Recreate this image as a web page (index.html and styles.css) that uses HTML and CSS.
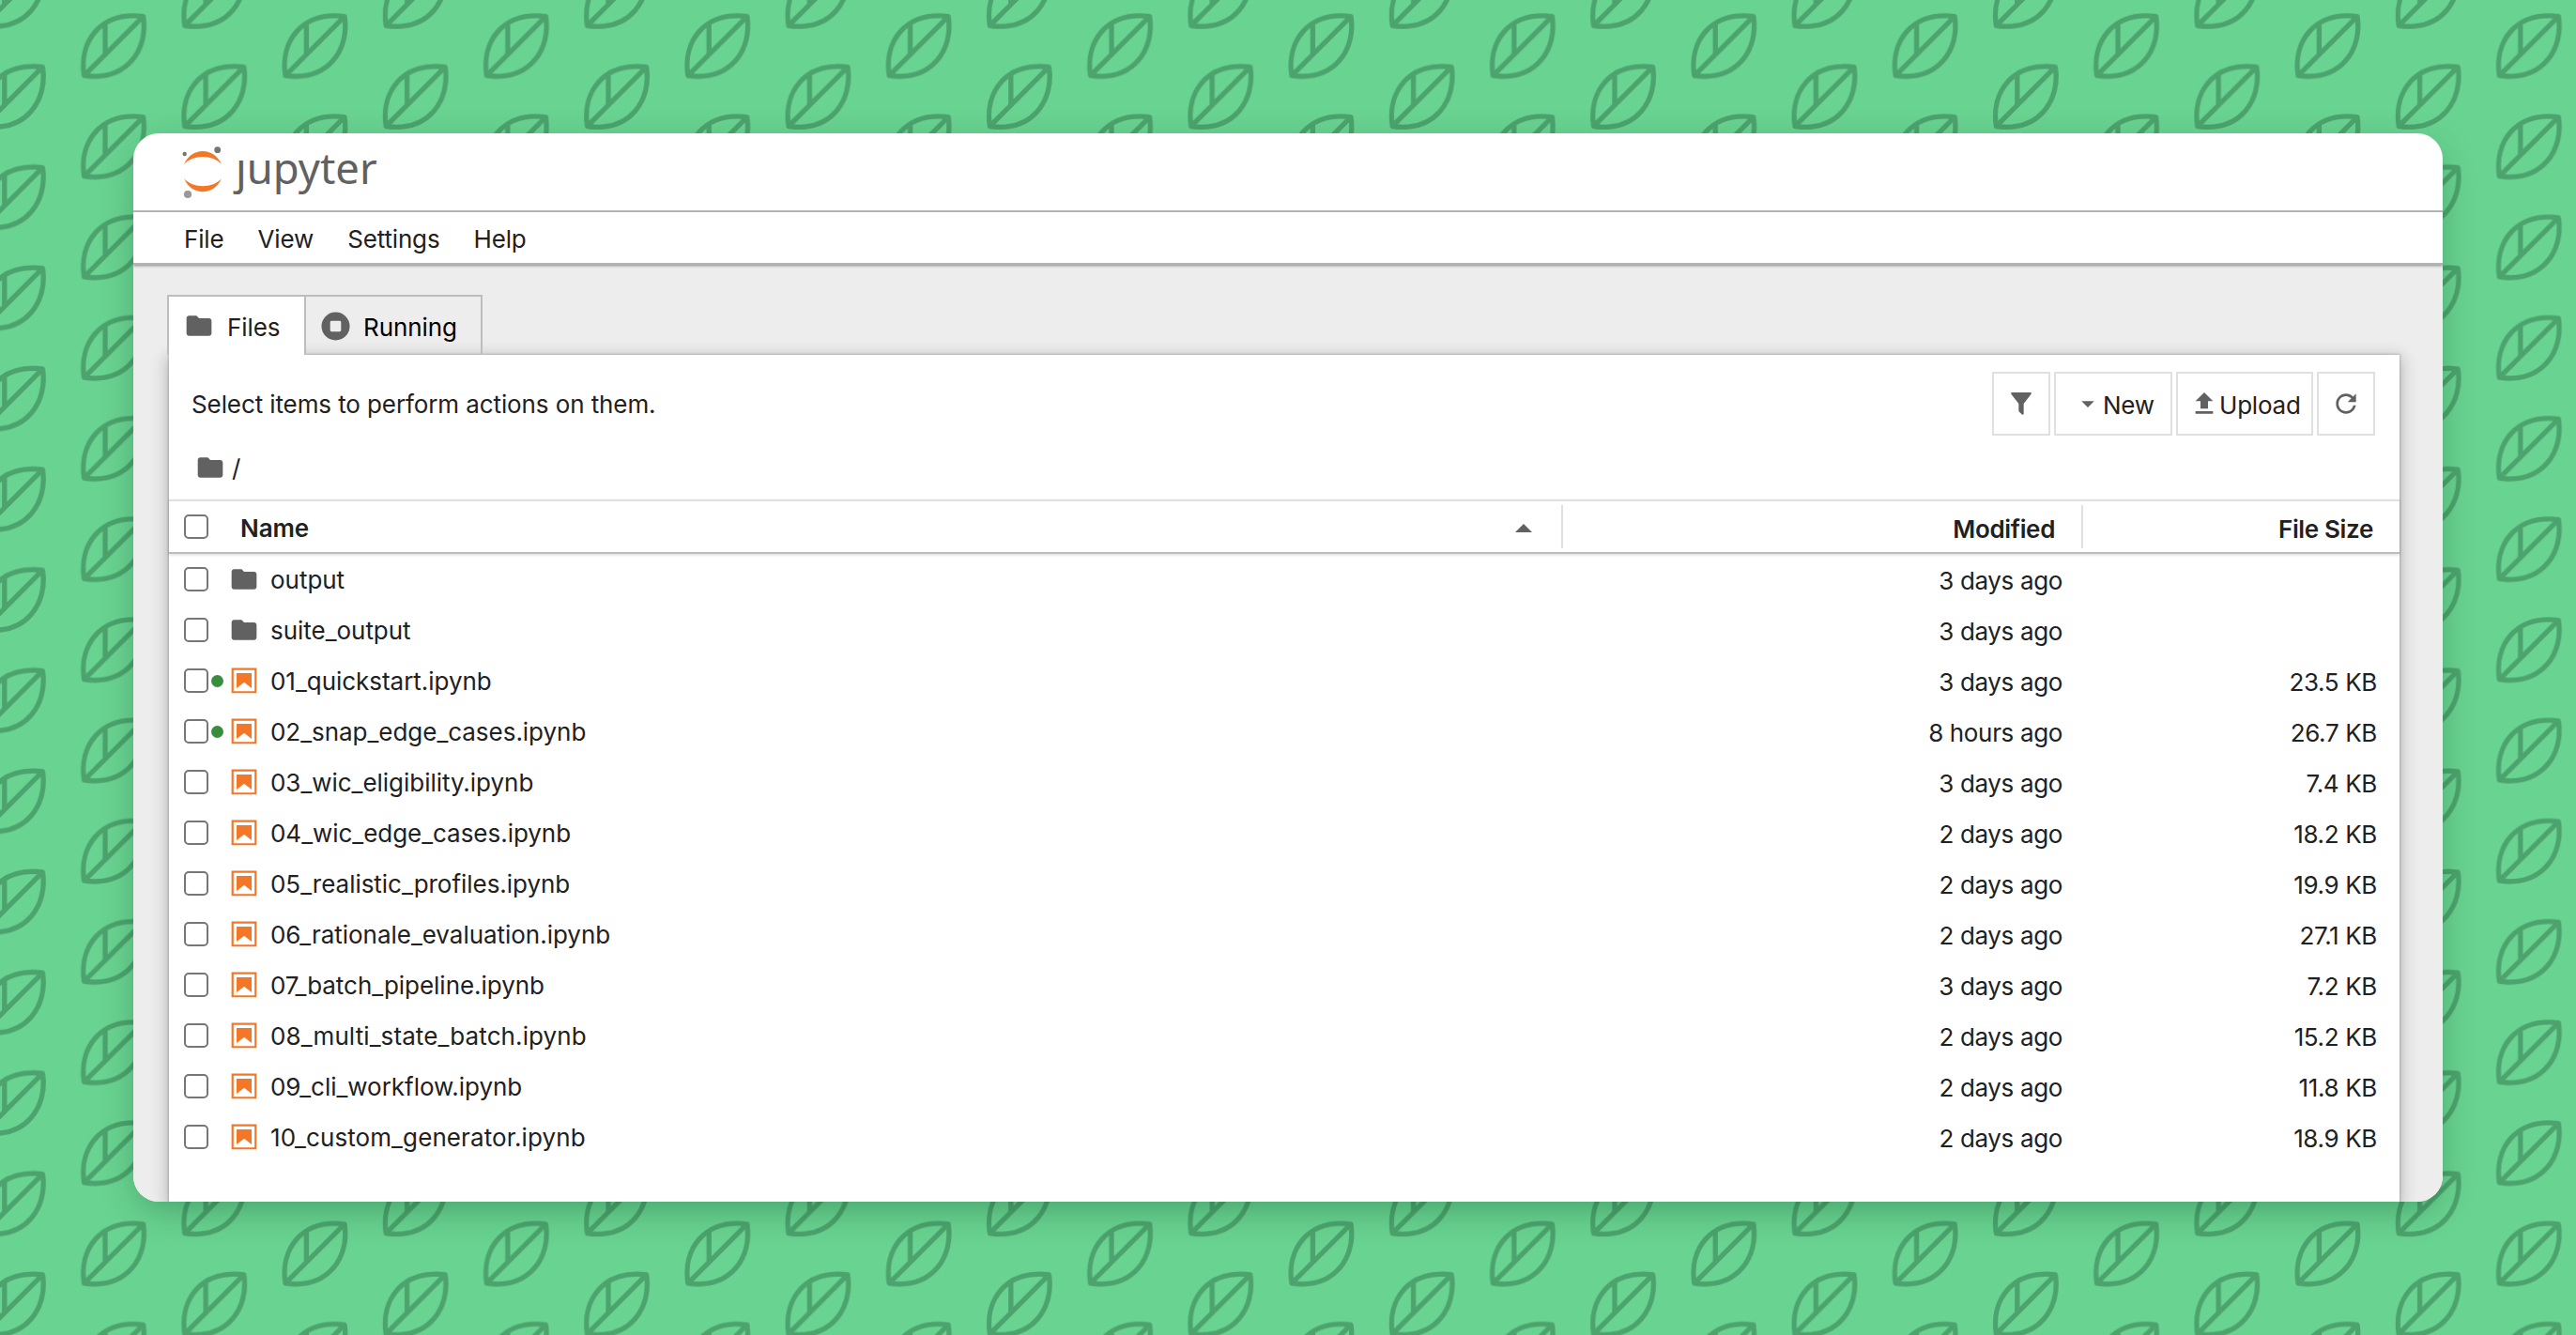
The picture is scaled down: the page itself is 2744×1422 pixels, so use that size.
FILE: index.html
```
<!DOCTYPE html>
<html lang="en">
<head>
<meta charset="utf-8">
<title>Home</title>
<link rel="stylesheet" href="styles.css">
</head>
<body>
<svg class="backdrop" aria-hidden="true">
  <defs>
    <pattern id="leaves" width="214.4" height="107.2" patternUnits="userSpaceOnUse">
      <g id="leaf" class="leaf">
        <path d="M89.6 80.6C84 45 106 12 152.6 17.4C158 52 136 87 89.6 80.6ZL152.6 17.4M112 26V59"/>
      </g>
      <use href="#leaf" x="107.2" y="53.9"/>
      <use href="#leaf" x="-107.2" y="53.9"/>
      <use href="#leaf" x="107.2" y="-53.3"/>
      <use href="#leaf" x="-107.2" y="-53.3"/>
    </pattern>
    <symbol id="folder" viewBox="0 0 24 24"><path d="M10 4H4c-1.1 0-1.99.9-1.99 2L2 18c0 1.1.9 2 2 2h16c1.1 0 2-.9 2-2V8c0-1.1-.9-2-2-2h-8l-2-2z"/></symbol>
    <symbol id="notebook" viewBox="0 0 22 22"><path d="M18.7 3.3v15.4H3.3V3.3h15.4m1.5-1.5H1.8v18.3h18.3l.1-18.3z"/><path d="M16.5 16.5l-5.4-4.3-5.6 4.3v-11h11z"/></symbol>
  </defs>
  <rect width="100%" height="100%" fill="url(#leaves)"/>
</svg>
<main class="window">
  <header class="brand">
    <svg class="logo" viewBox="0 0 44 58">
      <path class="ring" d="M3 21C11 2.300 35 2.300 43 21C34 10.300 12 10.300 3 21Z"/>
      <path class="ring" d="M3 36C11 55 35 55 43 36C34 47 12 47 3 36Z"/>
      <circle class="moon" cx="3.700" cy="10" r="2.200"/>
      <circle class="moon" cx="38.700" cy="5.700" r="3.400"/>
      <circle class="moon pale" cx="7" cy="53" r="4.100"/>
    </svg>
    <div class="wordmark"><span class="j">j</span>upyter</div>
  </header>
  <nav class="menu"><span>File</span><span>View</span><span>Settings</span><span>Help</span></nav>
  <section class="body">
    <div class="tabs">
      <div class="tab active"><svg class="icon"><use href="#folder"/></svg><span>Files</span></div>
      <div class="tab"><svg class="stop" viewBox="0 0 32 32"><path fill-rule="evenodd" d="M16 .5a15.500 15.500 0 1 0 0 31a15.500 15.500 0 1 0 0-31zM11.500 10h9a1.500 1.500 0 0 1 1.500 1.500v9a1.500 1.500 0 0 1-1.500 1.500h-9a1.500 1.500 0 0 1-1.500-1.500v-9a1.500 1.500 0 0 1 1.500-1.500z"/></svg><span>Running</span></div>
    </div>
    <div class="panel">
      <div class="toolbar">
        <span class="hint">Select items to perform actions on them.</span>
        <div class="btn square"><svg class="icon" viewBox="0 0 24 24"><path d="M14 12v7.900c0 .8-.7 1.300-1.300.8l-2.400-2.400a1 1 0 0 1-.3-.7V12L4 4.400V3h16v1.400z"/></svg></div>
        <div class="btn new"><svg class="icon" viewBox="0 0 18 18"><path d="M5.200 7.500L9 11.200l3.800-3.700H5.200z"/></svg><span>New</span></div>
        <div class="btn upload"><svg class="icon" viewBox="0 0 24 24"><path d="M5 20h14v-2H5v2zm0-10h4v6h6v-6h4l-7-7-7 7z"/></svg><span>Upload</span></div>
        <div class="btn square"><svg class="icon" viewBox="0 0 18 18"><path d="M9 13.500c-2.490 0-4.500-2.010-4.500-4.500S6.510 4.500 9 4.500c1.240 0 2.360.52 3.170 1.330L10 8h5V3l-1.760 1.760C12.150 3.680 10.660 3 9 3 5.690 3 3.010 5.690 3.010 9S5.690 15 9 15c2.970 0 5.430-2.160 5.900-5h-1.520c-.46 2-2.240 3.500-4.380 3.500z"/></svg></div>
      </div>
      <div class="crumbs"><svg class="icon"><use href="#folder"/></svg><span>/</span></div>
      <div class="head">
        <div class="name"><i class="check"></i><b>Name</b><svg class="sort" viewBox="0 0 18 9"><path d="M0 9L9 0L18 9z"/></svg></div>
        <b class="modified">Modified</b><b class="size">File Size</b>
      </div>
      <div class="row"><i class="check"></i><i class="dot"></i><svg class="icon"><use href="#folder"/></svg><span class="file">output</span><span class="when">3 days ago</span><span class="bytes"></span></div>
      <div class="row"><i class="check"></i><i class="dot"></i><svg class="icon"><use href="#folder"/></svg><span class="file">suite_output</span><span class="when">3 days ago</span><span class="bytes"></span></div>
      <div class="row"><i class="check"></i><i class="dot on"></i><svg class="icon nb"><use href="#notebook"/></svg><span class="file">01_quickstart.ipynb</span><span class="when">3 days ago</span><span class="bytes">23.5 KB</span></div>
      <div class="row"><i class="check"></i><i class="dot on"></i><svg class="icon nb"><use href="#notebook"/></svg><span class="file">02_snap_edge_cases.ipynb</span><span class="when">8 hours ago</span><span class="bytes">26.7 KB</span></div>
      <div class="row"><i class="check"></i><i class="dot"></i><svg class="icon nb"><use href="#notebook"/></svg><span class="file">03_wic_eligibility.ipynb</span><span class="when">3 days ago</span><span class="bytes">7.4 KB</span></div>
      <div class="row"><i class="check"></i><i class="dot"></i><svg class="icon nb"><use href="#notebook"/></svg><span class="file">04_wic_edge_cases.ipynb</span><span class="when">2 days ago</span><span class="bytes">18.2 KB</span></div>
      <div class="row"><i class="check"></i><i class="dot"></i><svg class="icon nb"><use href="#notebook"/></svg><span class="file">05_realistic_profiles.ipynb</span><span class="when">2 days ago</span><span class="bytes">19.9 KB</span></div>
      <div class="row"><i class="check"></i><i class="dot"></i><svg class="icon nb"><use href="#notebook"/></svg><span class="file">06_rationale_evaluation.ipynb</span><span class="when">2 days ago</span><span class="bytes">27.1 KB</span></div>
      <div class="row"><i class="check"></i><i class="dot"></i><svg class="icon nb"><use href="#notebook"/></svg><span class="file">07_batch_pipeline.ipynb</span><span class="when">3 days ago</span><span class="bytes">7.2 KB</span></div>
      <div class="row"><i class="check"></i><i class="dot"></i><svg class="icon nb"><use href="#notebook"/></svg><span class="file wide">08_multi_state_batch.ipynb</span><span class="when">2 days ago</span><span class="bytes">15.2 KB</span></div>
      <div class="row"><i class="check"></i><i class="dot"></i><svg class="icon nb"><use href="#notebook"/></svg><span class="file">09_cli_workflow.ipynb</span><span class="when">2 days ago</span><span class="bytes">11.8 KB</span></div>
      <div class="row"><i class="check"></i><i class="dot"></i><svg class="icon nb"><use href="#notebook"/></svg><span class="file wide">10_custom_generator.ipynb</span><span class="when">2 days ago</span><span class="bytes">18.9 KB</span></div>
    </div>
  </section>
</main>
</body>
</html>
```
FILE: styles.css
```
* { box-sizing: border-box; }
body {
  margin: 0;
  width: 2744px;
  height: 1422px;
  padding: 142px;
  overflow: hidden;
  background: #69d391;
  color: #212121;
  font: 26px/32px Inter, "Liberation Sans", sans-serif;
}
.backdrop { position: absolute; top: 0; left: 0; width: 2744px; height: 1422px; }
.leaf { fill: none; stroke: #4ca36d; stroke-width: 5.3; stroke-linejoin: round; }
.window {
  position: relative;
  width: 2460px;
  height: 1138px;
  display: flex;
  flex-direction: column;
  border-radius: 27px;
  overflow: hidden;
  background: #fff;
  box-shadow: 0 12px 40px -8px rgba(0, 60, 30, .38);
}
.brand { height: 84px; display: flex; padding: 12px 0 0 51px; border-bottom: 2px solid #bdbdbd; }
.logo { width: 44px; height: 58px; }
.ring { fill: #f37726; }
.moon { fill: #757575; }
.moon.pale { fill: #989898; }
.wordmark { margin-left: 14px; font: 45.4px/60px "Noto Sans", sans-serif; color: #616161; margin-top: -6px; }
.j { display: inline-block; clip-path: inset(21px -10px 0 -10px); }
.menu {
  position: relative;
  z-index: 1;
  height: 56px;
  display: flex;
  gap: 36px;
  padding: 13px 0 0 54px;
  letter-spacing: -.15px;
  border-bottom: 2px solid #b4b4b4;
  box-shadow: 0 1px 3px rgba(0, 0, 0, .45);
}
.body { flex: 1; display: flex; flex-direction: column; padding: 32px 46px 0 36px; background: #ededed; }
.tabs { display: flex; height: 64px; position: relative; z-index: 1; }
.tab { display: flex; align-items: center; width: 190px; margin-left: -2px; padding: 0 0 0 16px; border: 2px solid #bdbdbd; border-bottom: 0; color: #000; }
.tab.active { width: 148px; margin: 0; background: #fff; color: #212121; }
.tab span { margin-left: 14px; margin-top: 3px; letter-spacing: -.1px; }
.icon { width: 32px; height: 32px; fill: #616161; flex: none; }
.icon.nb { fill: #f37726; }
.stop { width: 31px; height: 31px; fill: #616161; }
.panel { flex: 1; margin-left: 2px; background: #fff; box-shadow: 0 0 2px 1px rgba(0, 0, 0, .16), 0 4px 16px 2px rgba(0, 0, 0, .24); }
.toolbar { height: 102px; display: flex; gap: 4px; padding: 18px 26px 16px 24px; align-items: center; }
.hint { flex: 1; margin-top: 2px; letter-spacing: -.1px; }
.btn { height: 68px; display: flex; align-items: center; border: 2px solid #e0e0e0; }
.btn.square { width: 62px; justify-content: center; }
.btn.new { width: 126px; padding-left: 18px; }
.btn.upload { width: 146px; padding-left: 12px; }
.new span { margin-top: 4px; letter-spacing: -.3px; }
.upload span { margin-top: 3px; letter-spacing: -.2px; }
.crumbs { height: 52px; display: flex; align-items: center; padding: 0 0 16px 28px; }
.crumbs span { margin-left: 7px; margin-top: 1px; }
.head { position: relative; height: 58px; display: flex; border-top: 2px solid #e0e0e0; border-bottom: 2px solid #bdbdbd; box-shadow: 0 1px 3px rgba(0, 0, 0, .16); }
.head b { font-weight: 600; letter-spacing: -.35px; }
.name { width: 1483px; display: flex; align-items: center; padding: 0 31px 0 16px; }
.name b { flex: 1; margin-left: 34px; margin-top: 4px; letter-spacing: -.1px; }
.sort { width: 18px; height: 9px; margin-top: 3px; fill: #616161; }
.modified, .size { margin: 4px 0; padding: 10px 28px 0 0; border-left: 2px solid #e0e0e0; text-align: right; }
.modified { width: 554px; }
.size { flex: 1; }
.row { height: 54px; display: flex; align-items: center; padding: 0 24px 0 16px; }
.check { flex: none; width: 26px; height: 26px; border: 2px solid #767676; border-radius: 5px; background: #fff; }
.dot { flex: none; width: 13px; height: 13px; margin: 0 6px 0 3px; border-radius: 50%; }
.dot.on { background: #388e3c; }
.file { flex: 1; margin-left: 12px; margin-top: 1px; letter-spacing: -.03px; }
.file.wide { letter-spacing: .1px; }
.when { width: 554px; text-align: right; margin-top: 3px; letter-spacing: -.35px; }
.bytes { width: 335px; text-align: right; margin-top: 3px; letter-spacing: -.35px; }
```
